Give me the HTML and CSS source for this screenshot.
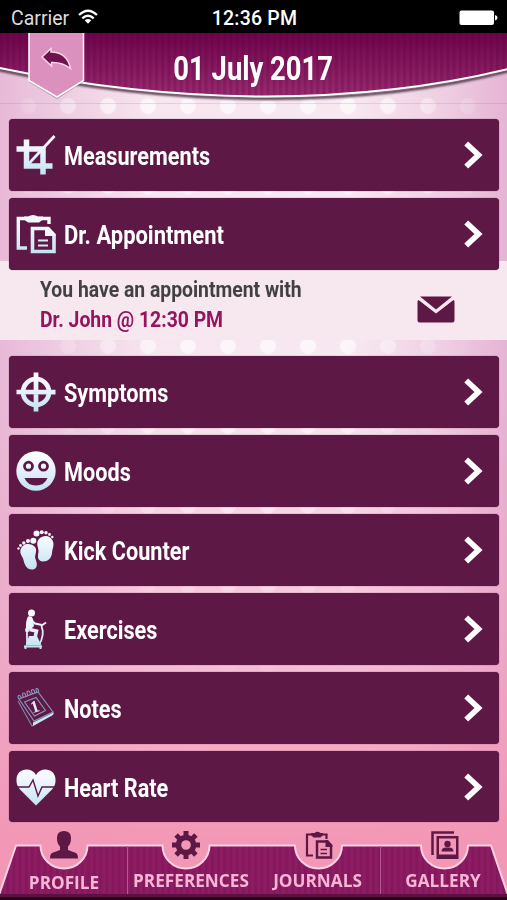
FILE: index.html
```
<!DOCTYPE html>
<html>
<head>
	<meta charset="UTF-8">
	<title>01 July 2017</title>
	<link rel="stylesheet" href="styles.css">
</head>

<body>
	<svg class="defs" width="0" height="0">
		<defs>
			<linearGradient id="ice" gradientUnits="userSpaceOnUse" x1="0" y1="0" x2="0" y2="40">
				<stop offset="0" stop-color="#fff"/>
				<stop offset=".35" stop-color="#edf5fc"/>
				<stop offset="1" stop-color="#c2e2f3"/>
			</linearGradient>
			<symbol id="arrow" viewBox="0 0 20 28">
				<path d="M2.200 2.500 14.500 14 2.200 25.500" fill="none" stroke="#fff" stroke-width="5.600"/>
			</symbol>
		</defs>
	</svg>

	<div class="status">
		<div class="carrier">
			<span>Carrier</span>
			<svg width="20" height="16" viewBox="0 0 20 16">
				<g fill="none" stroke="#fff" stroke-width="2.300">
					<path d="M1 6Q10-2.600 19 6"/>
					<path d="M4.300 9.400Q10 4 15.700 9.400"/>
				</g>
				<path d="M6.700 11.200Q10 8.600 13.300 11.200L10 14.800z" fill="#fff"/>
			</svg>
		</div>
		<div class="clock">12:36 PM</div>
		<svg class="battery" width="39" height="16" viewBox="0 0 39 16">
			<rect x=".5" y=".5" width="34.500" height="14.500" rx="2" fill="#fff"/>
			<path d="M36 5q2.500 .5 2.500 2.800T36 10.500z" fill="#fff"/>
		</svg>
	</div>

	<header>
		<svg class="curve" width="507" height="72" viewBox="0 0 507 72">
			<defs>
				<linearGradient id="plum" x1="0" y1="0" x2="0" y2="1">
					<stop offset="0" stop-color="#6b0048"/>
					<stop offset="1" stop-color="#9a2b70"/>
				</linearGradient>
				<pattern id="stripes" width="6.200" height="10" patternUnits="userSpaceOnUse">
					<rect width="3" height="10" fill="#4d0036" opacity=".2"/>
				</pattern>
				<filter id="soft"><feGaussianBlur stdDeviation="1.300"/></filter>
			</defs>
			<path d="M-5 36Q130 65 265 65.500T512 37" fill="none" stroke="#50394a" stroke-width="3" filter="url(#soft)"/>
			<path d="M-5-5V34Q130 63 265 63.500Q400 63 512 35V-5z" fill="url(#plum)"/>
			<path d="M-5-5V34Q130 63 265 63.500Q400 63 512 35V-5z" fill="url(#stripes)" stroke="#fff" stroke-width="2"/>
		</svg>
		<a class="back" href="#">
			<svg width="58" height="68" viewBox="0 0 58 68">
				<path d="M2-2H56.500V48L30 65 2 48z" fill="#50394a" opacity=".4" transform="translate(0 1)"/>
				<path d="M2-2H56.500V47.500L30 64 2 47.500z" fill="#dc90be" stroke="#fff" stroke-width="1.500"/>
				<path d="M15 24 24 15.500V19Q40 19 43.500 35.500Q35 29 24.500 29.500V33z" fill="#6f124f" stroke="#f7d5e9" stroke-width="1.500"/>
			</svg>
		</a>
		<h1><span>01 July 2017</span></h1>
	</header>

	<main>
		<a class="row" href="#">
			<svg class="icon" viewBox="0 0 40 40">
				<g fill="none" stroke="url(#ice)" stroke-width="5.500">
					<path d="M10.500 4.500V31H36.500M.5 14H27V39.500"/>
					<path d="M13 28.500 38.500 1" stroke-width="2.800"/>
				</g>
			</svg>
			<span class="label">Measurements</span>
			<svg class="next"><use href="#arrow"/></svg>
		</a>
		<a class="row" href="#">
			<svg class="icon" viewBox="0 0 40 40">
				<g fill="none" stroke="url(#ice)">
					<path d="M11 34H2.300V4.500H33V10" stroke-width="3.400"/>
					<path d="M16.500 14.500H31.500L38 21V37.500H16.500z" stroke-width="3.600"/>
					<path d="M22 26.500H32M22 31.500H32" stroke-width="1.900"/>
				</g>
				<path d="M8 2.500H12Q17-.5 22 2.500H27V5.500L23 8.500H12L8 5.500zM29 13H33L39.500 20V22H29z" fill="#f4f8fd"/>
			</svg>
			<span class="label wide">Dr. Appointment</span>
			<svg class="next"><use href="#arrow"/></svg>
		</a>

		<section class="detail">
			<div class="message">
				<p><span>You have an appointment with</span></p>
				<p class="who"><span>Dr. John @ 12:30 PM</span></p>
			</div>
			<svg class="mail" width="38" height="27" viewBox="0 0 38 27">
				<path d="M3 .5H35L19 13.500zM1.500 4 19 17.500 36.500 4Q37.500 4.500 37.500 6V24.500Q37.500 26.500 35.500 26.500H2.500Q.5 26.500 .5 24.500V6Q.5 4.500 1.500 4z" fill="#5e1846"/>
			</svg>
		</section>

		<a class="row" href="#">
			<svg class="icon" viewBox="0 0 40 40">
				<g fill="none" stroke="url(#ice)" stroke-width="4.700">
					<circle cx="20" cy="20" r="13"/>
					<path d="M20 .5V39.500M.5 20 39.500 20.100"/>
				</g>
			</svg>
			<span class="label">Symptoms</span>
			<svg class="next"><use href="#arrow"/></svg>
		</a>
		<a class="row" href="#">
			<svg class="icon" viewBox="0 0 40 40">
				<circle cx="20" cy="20" r="19.700" fill="url(#ice)"/>
				<g fill="none" stroke="#5e1846" stroke-width="2.800">
					<circle cx="12.500" cy="15.200" r="4"/>
					<circle cx="27.500" cy="15.200" r="4"/>
				</g>
				<path d="M8.500 27H31.500Q28.500 34.500 20 34.500T8.500 27z" fill="#5e1846"/>
			</svg>
			<span class="label">Moods</span>
			<svg class="next"><use href="#arrow"/></svg>
		</a>
		<a class="row" href="#">
			<svg class="icon" viewBox="0 0 40 40">
				<g fill="url(#ice)">
					<path d="M4.500 20C6.500 12.500 15 12.500 19 17C22 21 18 25 19.500 29C22 35 21 39 16.500 39.500C11 40 8.500 35 7.500 30C6.500 26 3.500 24 4.500 20z"/>
					<path d="M36.800 11C34 4 26 5 22.500 9.500C19.500 14 23 18 22.500 22C21.500 27 21.500 31 27 31.500C32 31.500 35.500 28 36 23C36.500 18 38.500 15 36.800 11z"/>
					<circle cx="17.300" cy="10.700" r="3"/>
					<circle cx="12" cy="11" r="2"/>
					<circle cx="7.800" cy="13" r="1.700"/>
					<circle cx="4.500" cy="15.500" r="1.400"/>
					<circle cx="2.500" cy="18.500" r="1.200"/>
					<circle cx="20.500" cy="3.500" r="3"/>
					<circle cx="25.700" cy="2.300" r="2"/>
					<circle cx="30" cy="2.800" r="1.700"/>
					<circle cx="33.500" cy="4.500" r="1.400"/>
					<circle cx="36.300" cy="7" r="1.200"/>
				</g>
			</svg>
			<span class="label">Kick Counter</span>
			<svg class="next"><use href="#arrow"/></svg>
		</a>
		<a class="row" href="#">
			<svg class="icon" viewBox="0 0 40 40">
				<g fill="url(#ice)">
					<circle cx="15.500" cy="4" r="3.500"/>
					<path d="M12 7.500Q16 6.500 17 10L18 17 14.500 20.500 10 20Q9.500 12 12 7.500zM9 19.500H14L12.500 23H9.500zM13 27H21L25.500 36.500H9.500z"/>
				</g>
				<g fill="none" stroke="url(#ice)">
					<path d="M15 11 19 14.500 26 16" stroke-width="2"/>
					<path d="M13.500 20.500 20.500 22 18.500 31" stroke-width="3.500"/>
					<path d="M25 17 30 13.500M23 36Q29 26 25.500 17M11 23V36" stroke-width="1.800"/>
					<path d="M8 37.500 26 37.600M9.500 37V40M24.500 37V40" stroke-width="2"/>
				</g>
			</svg>
			<span class="label">Exercises</span>
			<svg class="next"><use href="#arrow"/></svg>
		</a>
		<a class="row" href="#">
			<svg class="icon" viewBox="0 0 40 40">
				<g fill="none" stroke="#8b98ba" stroke-width="1.100">
					<path d="M3 11 22 4 37 24 18 33z"/>
					<path d="M8.500 14 20 9.500 29.500 22.500 18.500 28z"/>
					<path d="M2 13 16 38 38 25" stroke="#7889ad"/>
					<path d="M3 11 2 9Q3 5 5.500 10M7.500 9.500Q5.500 5 7.500 5T10 9M12 8Q10 3 12 3T14.500 7M16.500 6Q14.500 1.500 16.500 1.500T19 5.500M21 5Q19 0 21 .5T22.500 4.500"/>
				</g>
				<path d="M17 34.500 37.500 24.500 37 27 17 38z" fill="#c8e4f2"/>
				<text class="day" x="15" y="24" transform="rotate(-18 20 20)">1</text>
			</svg>
			<span class="label">Notes</span>
			<svg class="next"><use href="#arrow"/></svg>
		</a>
		<a class="row" href="#">
			<svg class="icon" viewBox="0 0 40 40">
				<path d="M20 38.500 4 22.500Q0 18 .5 12C1 6 5 2.500 10.500 2.500Q17 2.500 20 8Q23 2.500 29.500 2.500C35 2.500 39 6 39.500 12Q40 18 36 22.500z" fill="url(#ice)"/>
				<path d="M0 20H13L17 13 22 29 26 20H40" fill="none" stroke="#5e1846" stroke-width="1.400"/>
			</svg>
			<span class="label">Heart Rate</span>
			<svg class="next"><use href="#arrow"/></svg>
		</a>
	</main>

	<nav>
		<svg class="shape" width="507" height="58" viewBox="0 0 507 58">
			<defs>
				<pattern id="bars" width="6.200" height="10" patternUnits="userSpaceOnUse">
					<rect width="3" height="10" fill="#6e104e" opacity=".28"/>
				</pattern>
				<path id="tabs" d="M-1 53 16 3.500H40.500A23.500 23 0 0 0 87.500 3.500H162.500A23.500 23 0 0 0 209.500 3.500H295A23.500 23 0 0 0 342 3.500H421A23.500 23 0 0 0 468 3.500H491L508 53z"/>
			</defs>
			<use href="#tabs" fill="#8d1c63"/>
			<use href="#tabs" fill="url(#bars)" stroke="#fbd3e3" stroke-width="2"/>
			<path d="M127.500 4V55M380.500 4V55" stroke="#b45690"/>
			<path d="M0 52H507V55H0z" fill="#5e0f43"/>
			<path d="M0 55H507V58H0z" fill="#1e0616"/>
		</svg>
		<a class="tab profile" href="#">
			<svg width="28" height="28" viewBox="0 0 28 28">
				<path d="M14 0Q21 0 21 7Q21 13 18 15.500V19L26 22Q28 23 28 27.500H0Q0 23 2 22L10 19V15.500Q7 13 7 7Q7 0 14 0z"/>
			</svg>
			<span>PROFILE</span>
		</a>
		<a class="tab preferences" href="#">
			<svg width="28" height="28" viewBox="0 0 28 28">
				<circle cx="14" cy="14" r="7.600" fill="none" stroke="#5e1846" stroke-width="5.500"/>
				<path d="M14 0V5M14 23V28M0 14H5M23 14H28M4.100 4.100 7.500 7.500M20.500 20.500 23.900 23.900M23.900 4.100 20.500 7.500M4.100 23.900 7.500 20.500" stroke="#5e1846" stroke-width="5"/>
			</svg>
			<span>PREFERENCES</span>
		</a>
		<a class="tab journals" href="#">
			<svg width="28" height="28" viewBox="0 0 28 28">
				<g fill="none" stroke="#5e1846">
					<path d="M8 24.500H2V3.500H21.500V8" stroke-width="2.200"/>
					<path d="M12 10.500H21.500L26 15V26.500H12z" stroke-width="2.500"/>
					<path d="M15.500 18.500H22M15.500 22.500H22" stroke-width="1.400"/>
				</g>
				<path d="M6 2H9.500Q12.500-.5 15.500 2H18V4L15.500 6.500H8.500L6 4zM20.500 9H23L27.500 14V16H20.500z"/>
			</svg>
			<span>JOURNALS</span>
		</a>
		<a class="tab gallery" href="#">
			<svg width="28" height="28" viewBox="0 0 28 28">
				<path d="M1.500 24V1.500H23" fill="none" stroke="#5e1846" stroke-width="2.500"/>
				<path d="M5.500 5H27.500V28H5.500zM8 7.500V23.500H25V7.500z" fill-rule="evenodd"/>
				<circle cx="16.500" cy="13" r="3.200"/>
				<path d="M10.500 20.500Q10.500 16.500 15 16.500H18Q22.500 16.500 22.500 20.500z"/>
			</svg>
			<span>GALLERY</span>
		</a>
	</nav>
</body>
</html>
```
FILE: styles.css
```
* {
	box-sizing: border-box;
}
body {
	margin: 0;
	width: 507px;
	height: 900px;
	overflow: hidden;
	display: flex;
	flex-direction: column;
	font-family: Roboto, "Liberation Sans", sans-serif;
	background:
		linear-gradient(rgba(243, 151, 182, 0) 380px, rgba(243, 151, 182, .45) 640px, #f397b6 840px),
		linear-gradient(90deg, #e8b9d8 0, #edcce1 60px, #f7e5ef 150px, #f8e8f1 350px, #efcfe3 440px, #e6b4d4 507px);
}
/* dotted backdrop, fades out to the sides and the bottom */
body::before {
	content: "";
	position: fixed;
	top: 0;
	left: 0;
	width: 507px;
	height: 700px;
	z-index: -1;
	background: radial-gradient(circle, rgba(255, 255, 255, .6) 7px, transparent 9px) 8px 6px / 40px 40px;
	-webkit-mask-image: radial-gradient(ellipse 250px 640px at 250px 60px, #000 55%, transparent);
	mask-image: radial-gradient(ellipse 250px 640px at 250px 60px, #000 55%, transparent);
}
a {
	text-decoration: none;
}
.defs {
	position: absolute;
}
.status {
	height: 33px;
	padding: 3px 9px 0 11px;
	background: #000;
	color: #fff;
	display: grid;
	grid-template-columns: 1fr auto 1fr;
	align-items: center;
	font-size: 19.5px;
}
.carrier {
	display: flex;
	align-items: center;
	gap: 9px;
	color: #ddd;
}
.carrier svg {
	margin-top: -2px;
}
.clock {
	font-weight: 500;
	letter-spacing: .2px;
}
.battery {
	justify-self: end;
	margin-top: -1px;
}
header {
	position: relative;
	height: 86px;
	flex: none;
}
.curve {
	position: absolute;
	top: 0;
	left: 0;
}
header::after {
	content: "";
	position: absolute;
	top: 70px;
	left: 0;
	width: 100%;
	height: 1px;
	background: rgba(150, 110, 140, .2);
}
.back {
	position: absolute;
	top: 0;
	left: 27px;
	z-index: 1;
}
h1 {
	position: relative;
	margin: 0;
	padding-top: 16px;
	text-align: center;
	color: #fff;
	font-size: 33px;
	line-height: 40px;
	font-weight: 700;
}
h1 span {
	display: inline-block;
	transform: scaleX(.83);
}
main {
	display: flex;
	flex-direction: column;
	gap: 7px;
}
.row {
	position: relative;
	display: flex;
	align-items: center;
	height: 72px;
	margin: 0 8px 0 9px;
	padding: 0 15px 0 7px;
	border-radius: 4px;
	background: #5e1846;
	box-shadow: 0 0 1px #5e1846;
}
.row:last-child {
	height: 71px;
	padding-top: 1px;
}
.icon {
	width: 40px;
	height: 40px;
	margin-right: 8px;
}
.day {
	font: bold 17px "Liberation Serif", serif;
	fill: #dcebf7;
}
.label {
	padding-top: 2px;
	color: #fff;
	font-size: 25.5px;
	font-weight: 700;
	transform: scaleX(.85);
	transform-origin: left;
}
.wide {
	transform: scaleX(.86);
}
.next {
	width: 20px;
	height: 28px;
	margin-left: auto;
}
.detail {
	display: flex;
	justify-content: space-between;
	height: 79px;
	margin: -16px 0 9px;
	padding: 14px 52px 0 40px;
	background: #f7e8f0;
}
.message p {
	margin: 0;
	height: 30px;
	line-height: 28px;
	font-size: 22.5px;
	font-weight: 700;
	color: #424044;
}
.message span {
	display: inline-block;
	transform: scaleX(.86);
	transform-origin: left;
}
.message .who {
	color: #94155d;
}
.mail {
	margin-top: 21px;
}
nav {
	position: fixed;
	left: 0;
	bottom: 0;
	width: 507px;
	height: 69px;
	display: grid;
	grid-template-columns: 128px 126px 127px 126px;
}
.shape {
	position: absolute;
	left: 0;
	bottom: 0;
}
.tab {
	position: relative;
	display: flex;
	flex-direction: column;
	align-items: center;
	gap: 10px;
	color: #f8b6d6;
	fill: #5e1846;
	font: 700 17.2px/24px "Open Sans", sans-serif;
}
.profile {
	gap: 12px;
}
.preferences svg {
	margin-left: -10px;
}
.journals svg {
	margin-left: 2px;
}
.gallery {
	padding-right: 2px;
}
.gallery svg {
	margin-left: 4px;
}
```
